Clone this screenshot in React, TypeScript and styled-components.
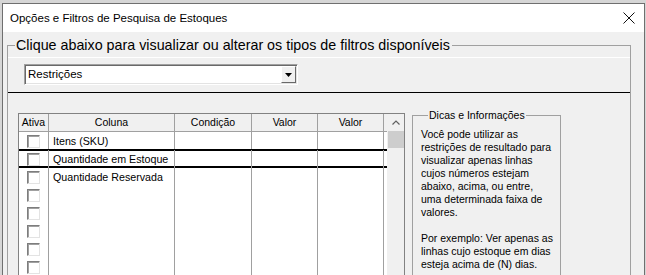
import React from 'react'
import styled, { createGlobalStyle } from 'styled-components'

const GlobalStyle = createGlobalStyle`
  html, body {
    margin: 0;
    padding: 0;
  }
  body {
    background: #d6d6d6;
    font-family: 'Liberation Sans', Arial, sans-serif;
    overflow: hidden;
  }
`

const columns = [
  { label: 'Ativa', width: 30 },
  { label: 'Coluna', width: 126 },
  { label: 'Condição', width: 77 },
  { label: 'Valor', width: 66 },
  { label: 'Valor', width: 66 },
]

const rows = [
  'Itens (SKU)',
  'Quantidade em Estoque',
  'Quantidade Reservada',
  '',
  '',
  '',
  '',
  '',
  '',
]

const tips = [
  'Você pode utilizar as',
  'restrições de resultado para',
  'visualizar apenas linhas',
  'cujos números estejam',
  'abaixo, acima, ou entre,',
  'uma determinada faixa de',
  'valores.',
  '',
  'Por exemplo: Ver apenas as',
  'linhas cujo estoque em dias',
  'esteja acima de (N) dias.',
]

const gridTemplate = columns.map(c => `${c.width}px`).join(' ') + ' 3px'

const App = () => {
  return (
    <Desk>
      <GlobalStyle />
      <Window>
        <TitleBar>
          <Title>Opções e Filtros de Pesquisa de Estoques</Title>
          <CloseIcon viewBox="0 0 12 12">
            <path d="M0.5 0.5 L11.5 11.5 M11.5 0.5 L0.5 11.5" />
          </CloseIcon>
        </TitleBar>

        <Body>
          <GroupBox>
            <BigLegend>Clique abaixo para visualizar ou alterar os tipos de filtros disponíveis</BigLegend>

            <FilterStrip>
              <Combo>
                <ComboText>Restrições</ComboText>
                <ComboButton>
                  <svg width="7" height="4" viewBox="0 0 7 4">
                    <path d="M0 0 H7 L3.5 4 Z" fill="#000" />
                  </svg>
                </ComboButton>
              </Combo>
            </FilterStrip>

            <Lower>
              <GridFrame>
                <DataArea>
                  <HeaderRow>
                    {columns.map((c, i) => (
                      <HeaderCell key={i}>{c.label}</HeaderCell>
                    ))}
                    <HeaderFiller />
                  </HeaderRow>
                  {rows.map((r, i) => (
                    <Row key={i} $selected={i === 1}>
                      <Cell>
                        <CheckBox />
                      </Cell>
                      <Cell $text>{r}</Cell>
                      <Cell />
                      <Cell />
                      <Cell />
                      <span />
                    </Row>
                  ))}
                </DataArea>
                <ScrollBar>
                  <ScrollArrow>
                    <svg width="8" height="5" viewBox="0 0 8 5">
                      <polyline points="0.5,4.5 4,1 7.5,4.5" fill="none" stroke="#606060" strokeWidth="1.2" />
                    </svg>
                  </ScrollArrow>
                  <Thumb />
                </ScrollBar>
              </GridFrame>

              <TipsBox>
                <SmallLegend>Dicas e Informações</SmallLegend>
                <TipsText>
                  {tips.map((t, i) => (
                    <TipLine key={i}>{t || '\u00a0'}</TipLine>
                  ))}
                </TipsText>
              </TipsBox>
            </Lower>
          </GroupBox>
        </Body>
      </Window>
    </Desk>
  )
}

const color = {
  face: '#f0f0f0',
  line: '#a0a0a0',
  frame: '#828282',
}

const Desk = styled.div`
  width: 646px;
  height: 275px;
  padding: 3px 1px 0 2px;
  box-sizing: border-box;
  display: flex;
  overflow: hidden;
`

const Window = styled.div`
  flex: 1;
  display: flex;
  flex-direction: column;
  border: 1px solid #6f6f6f;
  border-bottom: none;
  background: ${color.face};
  overflow: hidden;
`

const TitleBar = styled.div`
  flex: none;
  height: 28px;
  display: flex;
  align-items: center;
  justify-content: space-between;
  padding: 0 9px 0 7px;
  background: #fff;
`

const Title = styled.span`
  font-size: 11.5px;
  color: #000;
`

const CloseIcon = styled.svg`
  width: 12px;
  height: 12px;
  fill: none;
  stroke: #111;
  stroke-width: 1;
`

const Body = styled.div`
  flex: none;
  padding: 5px 13px 0 4px;
`

const GroupBox = styled.fieldset`
  margin: 0;
  padding: 4px 0 0 0;
  min-width: 0;
  height: 400px;
  border: 1px solid ${color.line};
  box-sizing: border-box;
`

const BigLegend = styled.legend`
  margin-left: 7px;
  padding: 0 2px 0 1px;
  font-size: 14.3px;
  line-height: 16px;
  color: #000;
`

const FilterStrip = styled.div`
  border-top: 1px solid #fff;
  border-bottom: 1px solid #000;
  padding: 6px 0 7px 16px;
`

const Combo = styled.div`
  width: 274px;
  height: 21px;
  box-sizing: border-box;
  display: flex;
  background: #fff;
  border: 1px solid;
  border-color: #a0a0a0 #fff #fff #a0a0a0;
  box-shadow: inset 1px 1px 0 #696969, inset -1px -1px 0 #e3e3e3;
  padding: 1px;
`

const ComboText = styled.span`
  flex: 1;
  padding-left: 2px;
  font-size: 11.5px;
  line-height: 17px;
  color: #000;
`

const ComboButton = styled.div`
  width: 15px;
  display: flex;
  align-items: center;
  justify-content: center;
  background: ${color.face};
  box-sizing: border-box;
  border: 1px solid;
  border-color: #fff #696969 #696969 #fff;
`

const Lower = styled.div`
  display: flex;
  align-items: flex-start;
  gap: 7px;
  padding-left: 10px;
`

const GridFrame = styled.div`
  margin-top: 20px;
  display: flex;
  border: 1px solid ${color.frame};
  background: #fff;
`

const DataArea = styled.div`
  display: flex;
  flex-direction: column;
`

const HeaderRow = styled.div`
  display: grid;
  grid-template-columns: ${gridTemplate};
  height: 18px;
  background: ${color.face};
`

const HeaderCell = styled.div`
  border-right: 1px solid ${color.line};
  border-bottom: 1px solid ${color.line};
  font-size: 10.5px;
  line-height: 17px;
  text-align: center;
  color: #000;
  white-space: nowrap;
  overflow: hidden;
`

const HeaderFiller = styled.div`
  border-bottom: 1px solid ${color.line};
`

const Row = styled.div<{ $selected?: boolean }>`
  display: grid;
  grid-template-columns: ${gridTemplate};
  height: 18px;
  box-shadow: ${p => (p.$selected ? '0 -1px 0 #000, inset 0 1px 0 #000, inset 0 -2px 0 #000' : 'none')};
`

const Cell = styled.div<{ $text?: boolean }>`
  border-right: 1px solid ${color.line};
  padding-left: ${p => (p.$text ? '4px' : '0')};
  font-size: 10.7px;
  line-height: 18px;
  color: #000;
  white-space: nowrap;
  overflow: hidden;
`

const CheckBox = styled.div`
  width: 13px;
  height: 13px;
  margin: 3px auto 0;
  box-sizing: border-box;
  background: #fff;
  border: 1px solid;
  border-color: #7d7d7d #e3e3e3 #e3e3e3 #7d7d7d;
  box-shadow: inset 1px 1px 0 #a0a0a0;
`

const ScrollBar = styled.div`
  width: 17px;
  background: ${color.face};
  display: flex;
  flex-direction: column;
`

const ScrollArrow = styled.div`
  height: 17px;
  display: flex;
  align-items: center;
  justify-content: center;
`

const Thumb = styled.div`
  height: 17px;
  margin: 0 0 0 1px;
  background: #cdcdcd;
`

const TipsBox = styled.fieldset`
  margin: 16px 0 0 0;
  padding: 6px 0 0 8px;
  width: 149px;
  min-width: 0;
  height: 300px;
  box-sizing: border-box;
  border: 1px solid ${color.line};
`

const SmallLegend = styled.legend`
  margin-left: 7px;
  padding: 0 1px 0 1px;
  font-size: 10.5px;
  line-height: 13px;
  color: #000;
`

const TipsText = styled.div`
  font-size: 10.5px;
  line-height: 13px;
  color: #000;
`

const TipLine = styled.div`
  white-space: nowrap;
`

export default App
